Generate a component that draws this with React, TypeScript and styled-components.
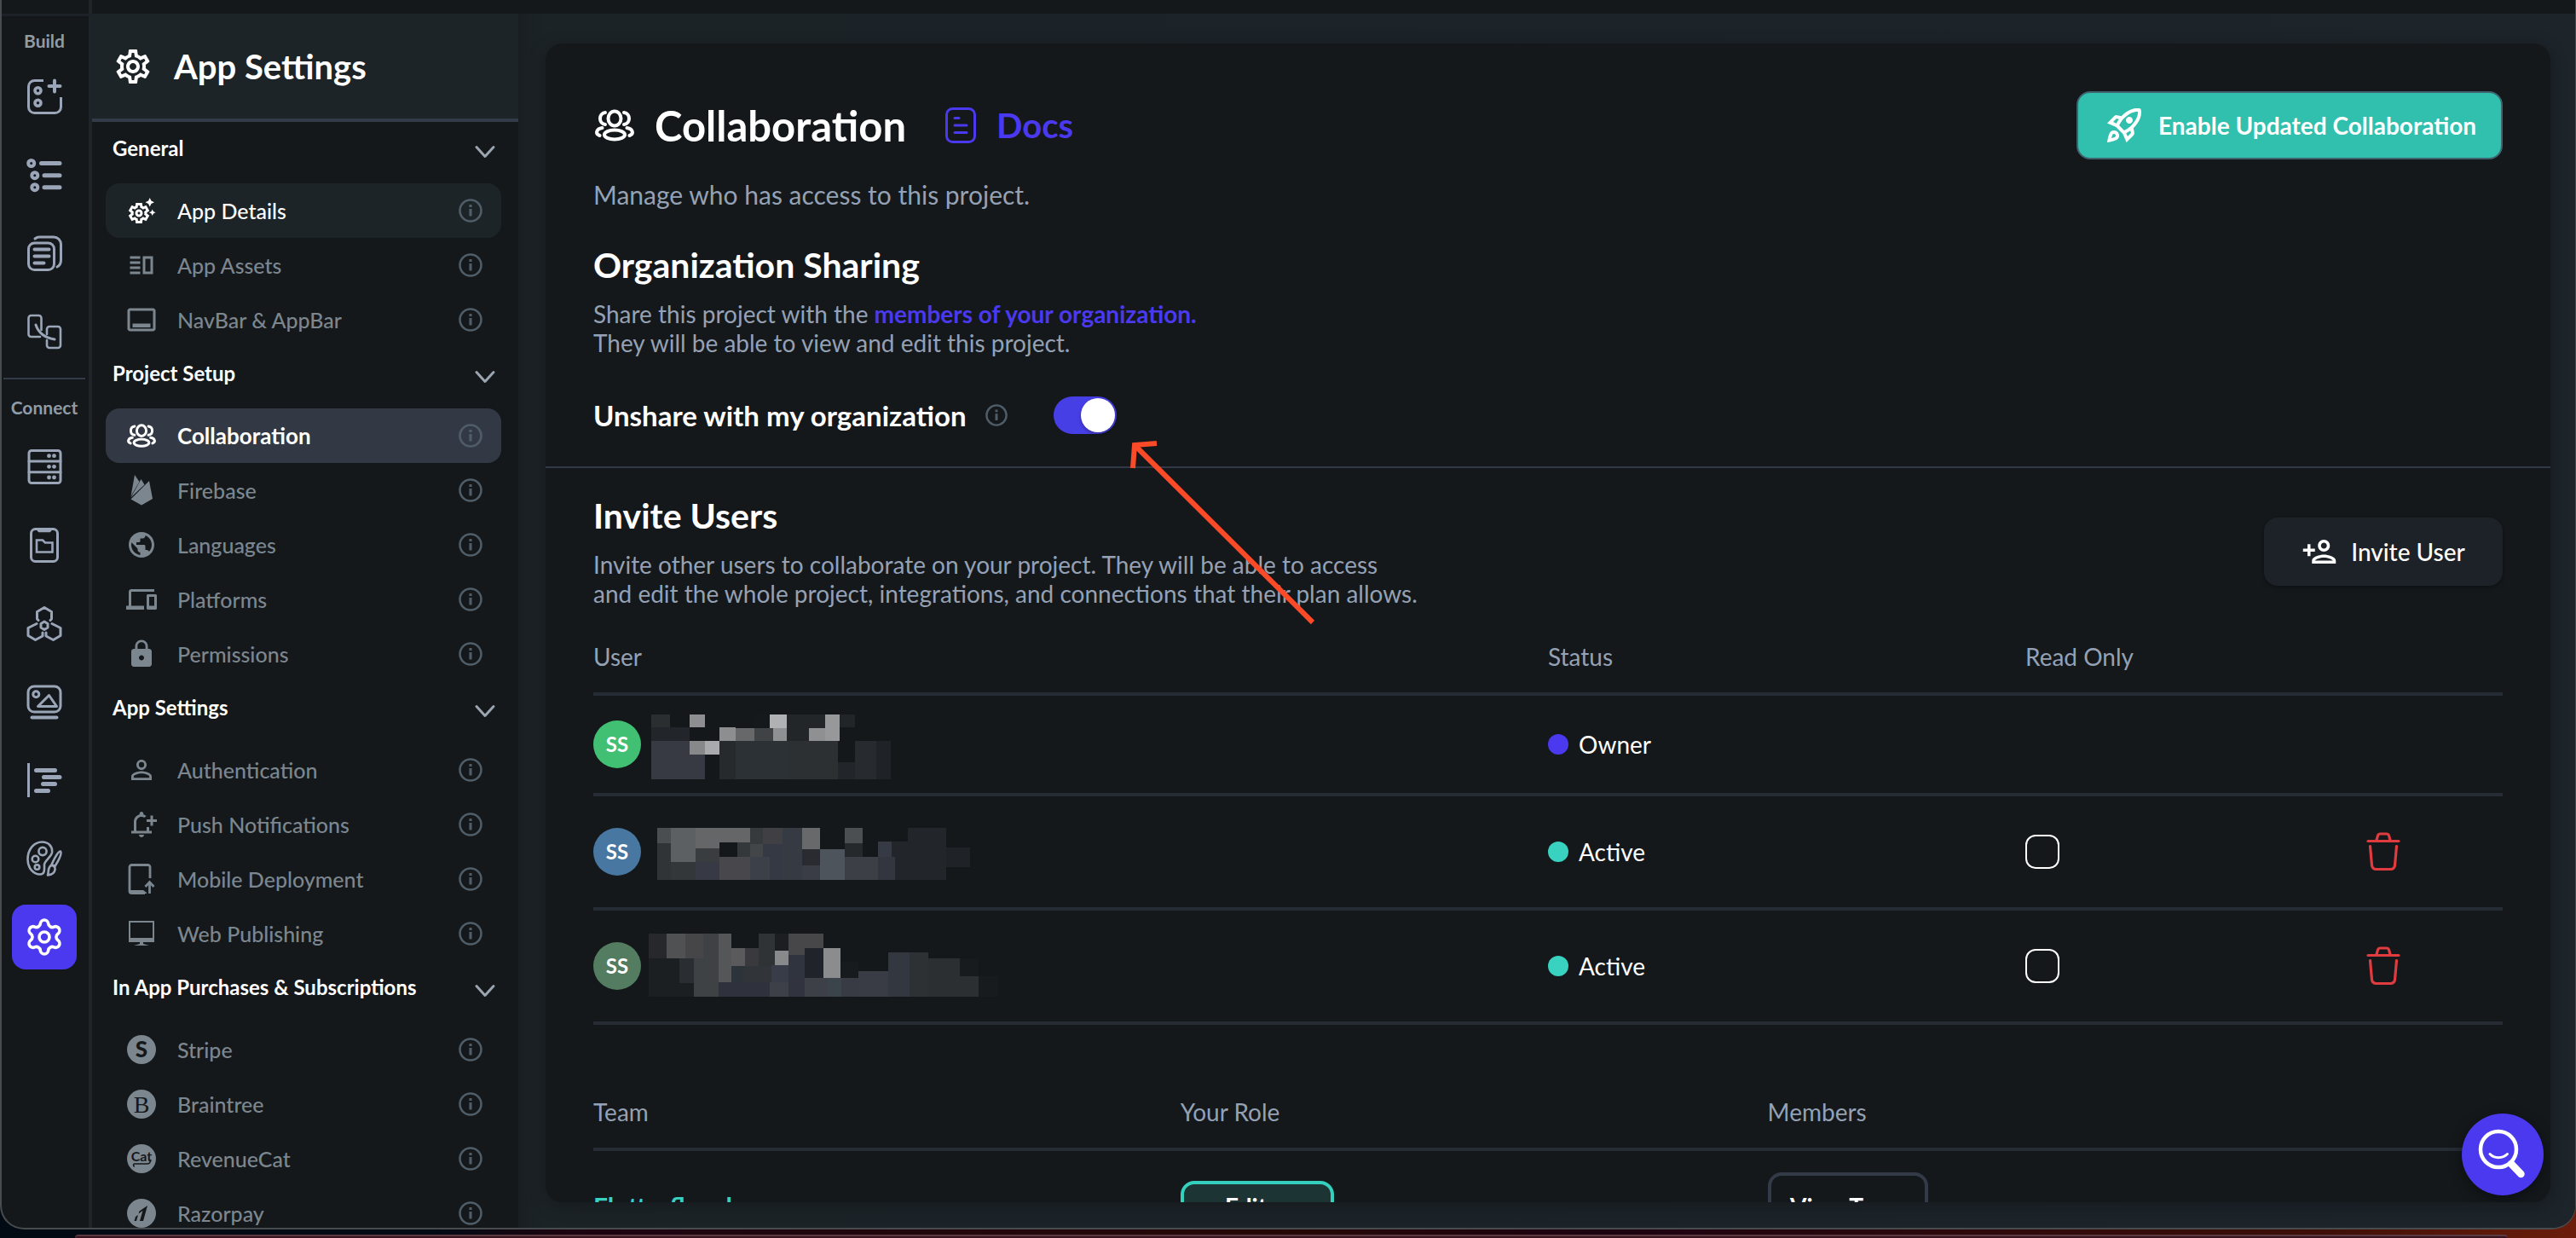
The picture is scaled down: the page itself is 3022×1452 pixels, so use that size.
import React, { useState } from "react";
import styled, { createGlobalStyle } from "styled-components";
import {
  MdOutlineSettings,
  MdOutlineSettingsSuggest,
  MdOutlineVerticalSplit,
  MdOutlineCallToAction,
  MdPublic,
  MdDevices,
  MdLock,
  MdPersonOutline,
  MdOutlineNotificationAdd,
  MdOutlineRocketLaunch,
  MdOutlinePersonAdd,
} from "react-icons/md";
import { Settings } from "lucide-react";

const color = {
  surface: "#14181b",
  raised: "#1d2428",
  line: "#323b47",
  tableLine: "#252c33",
  text: "#ffffff",
  body: "#95a1b4",
  muted: "#7c868f",
  hint: "#4f5d68",
  primary: "#4b39ef",
  teal: "#39d2c0",
  red: "#e03c40",
};

const GlobalStyle = createGlobalStyle`
  *, *::before, *::after { box-sizing: border-box; }
  body { margin: 0; background: #020b14; }
  body, button, input, table {
    font-family: Lato, "Open Sans", sans-serif;
    color: ${color.text};
  }
  button { border: 0; padding: 0; background: none; cursor: pointer; text-align: left; }
  h1, h2, p, ul { margin: 0; padding: 0; }
  ul { list-style: none; }
  a { text-decoration: none; }
  svg { display: block; flex: none; }
`;

const Desktop = styled.div`
  height: 100vh;
  overflow: hidden;
  display: flex;
  flex-direction: column;
  gap: 6px;
  background: linear-gradient(90deg, #020b14 0 17%, #1c0410 22%, #260806 50%, #1c0210 62%, #3d0f07 90%, #6b1d0a);
`;

const AppWindow = styled.div`
  flex: 1;
  min-height: 0;
  display: flex;
  flex-direction: column;
  overflow: hidden;
  background: ${color.surface};
  border: 2px solid #484c4e;
  border-top: 0;
  border-right-width: 1px;
  border-radius: 0 0 28px 28px;
`;

const BehindWindow = styled.div`
  height: 4px;
  margin: 0 80px 0 88px;
  border-top: 2px solid #5a3a40;
  border-radius: 20px 20px 0 0;
  background: #3a1420;
`;

const TopBar = styled.div`
  flex: none;
  height: 16px;
  width: 106px;
  border-right: 4px solid #1e2429;
`;

const Body = styled.div`
  flex: 1;
  min-height: 0;
  display: flex;
`;

const Rail = styled.nav`
  flex: none;
  width: 106px;
  padding-right: 2px;
  border-top: 3px solid #1d2229;
  border-right: 4px solid #1e2429;
  display: flex;
  flex-direction: column;
  align-items: center;
`;

const RailLabel = styled.div<{ $tall?: boolean }>`
  flex: none;
  height: ${(p) => (p.$tall ? 64 : 56)}px;
  display: flex;
  align-items: center;
  font-size: 21px;
  font-weight: 700;
  color: #8f9ba7;
`;

const RailGroup = styled.div`
  flex: none;
  display: flex;
  flex-direction: column;
  gap: 16px;
`;

const RailButton = styled.button<{ $active?: boolean }>`
  width: 76px;
  height: 76px;
  display: flex;
  align-items: center;
  justify-content: center;
  border-radius: 16px;
  color: ${(p) => (p.$active ? "#fff" : "#9aa5b8")};
  background: ${(p) => (p.$active ? color.primary : "transparent")};
`;

const RailDivider = styled.div`
  flex: none;
  align-self: stretch;
  height: 2px;
  margin: 16px 2px 0;
  background: ${color.line};
`;

const Panel = styled.aside`
  flex: none;
  width: 500px;
  overflow: hidden;
  display: flex;
  flex-direction: column;
`;

const PanelHeader = styled.header`
  flex: none;
  display: flex;
  align-items: center;
  gap: 24px;
  height: 127px;
  padding: 0 24px;
  background: ${color.raised};
  border-bottom: 4px solid ${color.line};
`;

const PanelTitle = styled.h2`
  font-size: 40px;
  line-height: 48px;
  font-weight: 700;
`;

const SectionToggle = styled.button`
  flex: none;
  width: 100%;
  height: 72px;
  padding: 0 26px 12px 24px;
  display: flex;
  align-items: center;
  justify-content: space-between;
  font-size: 24px;
  font-weight: 700;
`;

const MenuItem = styled.li<{ $tone?: "raised" | "active" }>`
  display: flex;
  align-items: center;
  height: 64px;
  margin: 0 20px 0 16px;
  padding: 0 22px 0 24px;
  border-radius: 16px;
  color: ${(p) => (p.$tone ? "#fff" : color.muted)};
  background: ${(p) => (p.$tone === "active" ? "#323945" : p.$tone === "raised" ? color.raised : "transparent")};
`;

const MenuLink = styled.a<{ $bold?: boolean }>`
  flex: 1;
  display: flex;
  align-items: center;
  gap: 24px;
  font-size: ${(p) => (p.$bold ? 26 : 25)}px;
  line-height: 32px;
  font-weight: ${(p) => (p.$bold ? 700 : 500)};
  color: inherit;
`;

const IconSlot = styled.span`
  width: 36px;
  display: flex;
  align-items: center;
  justify-content: center;
`;

const InfoButton = styled.button`
  color: ${color.hint};
`;

const Main = styled.main`
  flex: 1;
  min-width: 0;
  padding: 35px 29px 30px 32px;
  background: linear-gradient(90deg, #191e21, #1c2327 32px, #1d242a);
`;

const Card = styled.div`
  position: relative;
  height: 100%;
  overflow: hidden;
  border-radius: 20px;
  background: ${color.surface};
  box-shadow: 0 4px 20px rgba(0, 0, 0, 0.3);
`;

const Sharing = styled.section`
  padding: 56px 56px 38px;
  border-bottom: 2px solid #323845;
`;

const SplitRow = styled.div`
  display: flex;
  align-items: center;
  justify-content: space-between;
`;

const TitleGroup = styled.div`
  display: flex;
  align-items: center;
  gap: 24px;
  padding-left: 2px;
`;

const Title = styled.h1`
  font-size: 49px;
  line-height: 58px;
  font-weight: 700;
`;

const DocsLink = styled.a`
  display: flex;
  align-items: center;
  gap: 24px;
  margin-left: 22px;
  font-size: 40px;
  line-height: 48px;
  font-weight: 700;
  color: ${color.primary};
`;

const EnableButton = styled.button`
  min-width: 500px;
  height: 80px;
  display: flex;
  align-items: center;
  gap: 16px;
  padding: 0 24px 0 30px;
  border: 2px solid #3f6470;
  border-radius: 16px;
  background: #31bfae;
  font-size: 28px;
  font-weight: 700;
`;

const Text = styled.p<{ $gap?: number; $lead?: boolean }>`
  margin-top: ${(p) => p.$gap ?? 16}px;
  font-size: ${(p) => (p.$lead ? 30 : 28)}px;
  line-height: 34px;
  color: ${color.body};
`;

const MembersLink = styled.a`
  font-weight: 700;
  color: ${color.primary};
`;

const SectionTitle = styled.h2<{ $gap?: number }>`
  margin-top: ${(p) => p.$gap ?? 0}px;
  font-size: 41px;
  line-height: 48px;
  font-weight: 700;
`;

const SwitchRow = styled.div`
  display: flex;
  align-items: center;
  height: 44px;
  margin-top: 46px;
`;

const SwitchLabel = styled.label`
  margin-right: 22px;
  font-size: 33px;
  line-height: 40px;
  font-weight: 700;
`;

const Switch = styled.input`
  appearance: none;
  width: 74px;
  height: 44px;
  margin: 0 0 0 54px;
  padding: 2px;
  border-radius: 22px;
  background: #473fe6;
  display: flex;
  justify-content: flex-start;
  cursor: pointer;
  &::before {
    content: "";
    width: 40px;
    height: 40px;
    border-radius: 50%;
    background: #fff;
    box-shadow: 0 2px 4px rgba(0, 0, 0, 0.3);
  }
  &:checked { justify-content: flex-end; }
`;

const Invite = styled.section`
  padding: 32px 56px 0;
`;

const InviteButton = styled.button`
  height: 80px;
  width: 280px;
  display: flex;
  align-items: center;
  justify-content: center;
  gap: 16px;
  border-radius: 16px;
  background: #1d2229;
  box-shadow: 0 2px 4px rgba(0, 0, 0, 0.3);
  font-size: 28px;
  font-weight: 500;
`;

const Table = styled.table`
  width: 100%;
  table-layout: fixed;
  border-collapse: separate;
  border-spacing: 0;
  font-size: 28px;
  line-height: 34px;
`;

const Col = styled.col<{ $share: string }>`
  width: ${(p) => p.$share};
`;

const HeadCell = styled.th<{ $top: number }>`
  padding: ${(p) => p.$top}px 0 25px;
  border-bottom: 4px solid ${color.tableLine};
  text-align: left;
  font-weight: 400;
  color: ${color.body};
`;

const Cell = styled.td<{ $height?: number }>`
  height: ${(p) => (p.$height ?? 130) + 4}px;
  padding: 0;
  border-bottom: 4px solid ${color.tableLine};
  vertical-align: middle;
`;

const Person = styled.div`
  display: flex;
  align-items: center;
  gap: 8px;
`;

const Avatar = styled.span<{ $bg: string }>`
  width: 56px;
  height: 56px;
  border-radius: 50%;
  display: flex;
  align-items: center;
  justify-content: center;
  font-size: 24px;
  font-weight: 700;
  background: ${(p) => p.$bg};
`;

const Status = styled.div<{ $dot: string }>`
  display: flex;
  align-items: center;
  gap: 12px;
  &::before {
    content: "";
    width: 24px;
    height: 24px;
    border-radius: 50%;
    background: ${(p) => p.$dot};
  }
`;

const Check = styled.input`
  appearance: none;
  display: block;
  width: 40px;
  height: 40px;
  margin: 0;
  border: 2px solid #fff;
  border-radius: 12px;
  &:checked { background: ${color.primary}; }
`;

const TrashButton = styled.button`
  display: block;
  margin: 0 auto;
  color: ${color.red};
`;

const TeamLink = styled.a`
  font-size: 30px;
  font-weight: 700;
  color: ${color.teal};
`;

const RoleBadge = styled.span`
  display: flex;
  align-items: center;
  justify-content: center;
  width: 180px;
  height: 60px;
  border: 4px solid #35cfbd;
  border-radius: 16px;
  background: #1c3433;
  font-weight: 700;
`;

const ViewTeamButton = styled.button`
  display: block;
  width: 188px;
  height: 80px;
  border: 4px solid ${color.line};
  border-radius: 16px;
  font-size: 28px;
  font-weight: 700;
  text-align: center;
`;

const ArrowMark = styled.svg`
  position: absolute;
  left: 680px;
  top: 460px;
  pointer-events: none;
`;

const SearchFab = styled.button`
  position: absolute;
  right: 8px;
  bottom: 8px;
  width: 96px;
  height: 96px;
  border-radius: 50%;
  background: ${color.primary};
  box-shadow: 0 4px 16px rgba(0, 0, 0, 0.4);
`;

/* ---------- icons ---------- */

const RailSvg = ({ children, w = 3 }: { children: React.ReactNode; w?: number }) => (
  <svg width="42" height="42" viewBox="0 0 42 42" fill="none" stroke="currentColor" strokeWidth={w} strokeLinecap="round" strokeLinejoin="round" aria-hidden="true">
    {children}
  </svg>
);

const WidgetsIcon = () => (
  <RailSvg w={3}>
    <path d="M20 2.5H9.500a7 7 0 0 0-7 7v24a7 7 0 0 0 7 7h24a7 7 0 0 0 7-7V22" strokeLinecap="butt" />
    <circle cx="13.500" cy="14.300" r="3.500" strokeWidth="3.600" />
    <circle cx="13.500" cy="28.700" r="3.500" strokeWidth="3.600" />
    <path d="M33 2.500v13M26.500 9h13" strokeWidth="4" />
  </RailSvg>
);
const TreeIcon = () => (
  <RailSvg w={4}>
    <circle cx="5.700" cy="7.500" r="3.500" />
    <circle cx="9.800" cy="21.700" r="3.500" />
    <circle cx="9.800" cy="35.700" r="3.500" />
    <path d="M17.500 7.500H39M21 21.700h18M21 35.700h18" strokeWidth="5" />
  </RailSvg>
);
const PagesIcon = () => (
  <RailSvg>
    <rect x="2.500" y="9" width="30" height="31.500" rx="7" />
    <path d="M10 4c1.500-1.300 3-2 5-2h17a8.500 8.500 0 0 1 8.500 8.500V29c0 4-1.500 6.500-4.500 8" />
    <path d="M9.500 16.500h17M9.500 24.500h17M9.500 32.500h11" strokeWidth="4" />
  </RailSvg>
);
const FlowIcon = () => (
  <RailSvg w={2.6}>
    <path d="M17.500 19V5a3 3 0 0 0-3-3h-9a3 3 0 0 0-3 3v19a3 3 0 0 0 3 3H16" />
    <path d="M24 24v-6a3 3 0 0 1 3-3h10a3 3 0 0 1 3 3v19a3 3 0 0 1-3 3H27a3 3 0 0 1-3-3v-6" />
    <path d="M11 13c3 9 9 15 22 17" strokeWidth="3" />
  </RailSvg>
);
const DatabaseIcon = () => (
  <RailSvg>
    <rect x="3" y="2.500" width="37" height="38" rx="3" />
    <path d="M3 15h37M3 27.700h37" />
    {[8.700, 21.300, 34].map((y) => (
      <g key={y} fill="currentColor" stroke="none">
        <circle cx="26.500" cy={y} r="2.400" />
        <circle cx="32.500" cy={y} r="2.400" />
      </g>
    ))}
  </RailSvg>
);
const ApiFolderIcon = () => (
  <RailSvg>
    <rect x="5.500" y="2.500" width="31" height="38" rx="5" />
    <path d="M12.500 3h17l-2 2.500h-13z" fill="currentColor" strokeWidth="1.500" />
    <path d="M12 15.500h7l3 3h8.500v11H12z" strokeWidth="2.600" strokeLinejoin="miter" />
  </RailSvg>
);
const HexIcon = () => (
  <RailSvg>
    <path d="M14 17.500l-1.500-1.500V7.500l8.500-5 8.500 5V16L28 17.500" />
    <path d="M12 21.500L2 26.500v9l8.500 5 8.500-4.500V32" />
    <path d="M30 21.500l10 5v9l-8.500 5L23 36v-4" />
    <path d="M21 19l4 2.500v4.500l-4 2.500-4-2.500v-4.500z" />
  </RailSvg>
);
const MediaIcon = () => (
  <RailSvg>
    <rect x="2" y="3" width="38" height="30" rx="7" />
    <circle cx="11.300" cy="12.300" r="3.500" />
    <path d="M26.500 13.500L13.500 26.500h22z" />
    <path d="M6.500 39.500h29" strokeWidth="4" />
  </RailSvg>
);
const TimelineIcon = () => (
  <RailSvg w={5}>
    <path d="M2.500 1v40" strokeWidth="3" strokeLinecap="butt" />
    <path d="M11.500 9.500h22M20.500 17.500H39M19.500 25.500h14M11.500 33.500h14" />
  </RailSvg>
);
const ThemeIcon = () => (
  <RailSvg w={2.6}>
    <path d="M21 28c0-4 8-9 9-14C31 6 25 1.500 18.500 1.500 8 1.500 1.500 11 1.500 22S9 39.500 16 39.500c6 0 5-6 5-11.500z" />
    <circle cx="19" cy="12.500" r="4.600" />
    <circle cx="10.500" cy="21.500" r="3.800" />
    <circle cx="12.500" cy="31" r="2.800" />
    <path d="M40 12.500c1.500 2-.5 8-6.500 17.500l-4-2C34 18 38 12 40 12.500z" />
    <path d="M29 29c3 0 5 2 4.500 5-.5 3.500-4 6-8.500 6.500 1.500-4-.5-9 4-11.500z" />
  </RailSvg>
);

const InfoIcon = ({ size = 28 }: { size?: number }) => (
  <svg width={size} height={size} viewBox="0 0 28 28" fill="none" stroke="currentColor" strokeWidth="2.600" aria-hidden="true">
    <circle cx="14" cy="14" r="12.500" />
    <path d="M14 12v8.500" strokeWidth="3.200" />
    <path d="M14 7v3" strokeWidth="3.200" />
  </svg>
);
const Chevron = () => (
  <svg width="26" height="26" viewBox="0 0 26 26" fill="none" stroke="#9aa5b0" strokeWidth="3" strokeLinecap="round" strokeLinejoin="round" aria-hidden="true">
    <path d="M3 12.500l10 11 10-11" />
  </svg>
);
const GroupIcon = ({ width }: { width: number }) => (
  <svg width={width} height={(width * 38) / 46} viewBox="0 0 46 38" fill="none" stroke="currentColor" strokeWidth="4" strokeLinecap="round" aria-hidden="true">
    <ellipse cx="23" cy="11" rx="7.500" ry="8.500" />
    <ellipse cx="23" cy="30" rx="12" ry="5.500" />
    <path d="M12 4c-8 1-8 13 0 14M34 4c8 1 8 13 0 14" />
    <path d="M8.500 22c-7 1-8.500 7-3 9M37.500 22c7 1 8.500 7 3 9" />
  </svg>
);
const FirebaseIcon = () => (
  <svg width="26" height="36" viewBox="0 0 26 36" fill="currentColor" aria-hidden="true">
    <path d="M.5 25L5 0l5.500 8z" />
    <path d="M.5 26.500L12.500 5l4 6.500z" />
    <path d="M.5 28.500L22 7l4 21-13 7.500z" />
  </svg>
);
const MobileDeployIcon = () => (
  <svg width="32" height="36" viewBox="0 0 32 36" fill="none" stroke="currentColor" strokeWidth="2.800" aria-hidden="true">
    <path d="M26 17V4a2.500 2.500 0 0 0-2.500-2.500h-19A2.500 2.500 0 0 0 2 4v28a2.500 2.500 0 0 0 2.500 2.500H20" />
    <path d="M2 31.500h16l4 3H4z" fill="currentColor" strokeWidth="1" />
    <path d="M25.500 35V23M20.500 27l5-5.500 5 5.500" />
  </svg>
);
const MonitorIcon = () => (
  <svg width="32" height="30" viewBox="0 0 32 30" fill="currentColor" aria-hidden="true">
    <path d="M1 0h30v25H1zM3 2v18h26V2z" fillRule="evenodd" />
    <path d="M14 25h4v2l7 2H7l7-2z" />
  </svg>
);
const LetterCoin = ({ letter, size = 28, family = "Lato", weight = 700 }: { letter: string; size?: number; family?: string; weight?: number }) => (
  <svg width="34" height="34" viewBox="0 0 34 34" aria-hidden="true">
    <circle cx="17" cy="17" r="17" fill="currentColor" />
    <text x="17" y={17 + size * 0.36} textAnchor="middle" fontFamily={family} fontWeight={weight} fontSize={size} fill={color.surface}>
      {letter}
    </text>
  </svg>
);
const RevenueCatIcon = () => (
  <svg width="34" height="34" viewBox="0 0 34 34" aria-hidden="true">
    <circle cx="17" cy="17" r="17" fill="currentColor" />
    <text x="17" y="20" textAnchor="middle" fontFamily="Lato" fontWeight="700" fontSize="16" fill={color.surface}>Cat</text>
    <path d="M27 18c1 4-1 5-4 5H9c-2 0-2 3 0 3" fill="none" stroke={color.surface} strokeWidth="1.500" />
  </svg>
);
const RazorpayIcon = () => (
  <svg width="34" height="34" viewBox="0 0 34 34" aria-hidden="true">
    <circle cx="17" cy="17" r="17" fill="currentColor" />
    <path d="M24 8l-5 18h-4l3.500-12-5 3.500 1-3zM13 19l-2 7H8.500l1.500-5z" fill={color.surface} />
  </svg>
);
const DocsIcon = () => (
  <svg width="36" height="42" viewBox="0 0 36 42" fill="none" stroke="currentColor" strokeWidth="3" strokeLinecap="round" aria-hidden="true">
    <rect x="1.500" y="1.500" width="33" height="39" rx="7" />
    <path d="M11 12.500h5M11 21h14M11 29.500h14" />
  </svg>
);
const TrashIcon = () => (
  <svg width="40" height="46" viewBox="0 0 40 46" fill="none" stroke="currentColor" strokeWidth="3.200" strokeLinecap="round" strokeLinejoin="round" aria-hidden="true">
    <path d="M2 10.500h36M12 9.500l1.500-5.500a3 3 0 0 1 3-2h7a3 3 0 0 1 3 2L28 9.500" />
    <path d="M4.500 16.500L6.500 39a5 5 0 0 0 5 4.500h17a5 5 0 0 0 5-4.500l2-22.500" />
  </svg>
);
const SmileSearchIcon = () => (
  <svg width="96" height="96" viewBox="0 0 96 96" fill="none" stroke="#fff" strokeLinecap="round" aria-hidden="true">
    <circle cx="43" cy="42" r="21" strokeWidth="4.500" />
    <path d="M33 47.500c5 5.500 15 5.500 20.500 0" strokeWidth="3" />
    <path d="M58 59l11.500 12" strokeWidth="8.500" />
  </svg>
);

/* ---------- pixelated names ---------- */

type Block = [number, number, number, number, string];

const mosaics: Record<string, { top: number; blocks: Block[] }> = {
  owner: {
    top: 643,
    blocks: [
      [194, 660, 35, 36, "#2b2e30"], [265, 660, 28, 36, "#8e8e90"], [384, 660, 28, 36, "#16191c"], [412, 660, 32, 38, "#b0b1b3"],
      [444, 660, 70, 74, "#232628"], [514, 660, 27, 74, "#97989a"], [541, 660, 28, 36, "#222528"], [194, 696, 71, 38, "#222529"],
      [320, 696, 30, 38, "#8d8e90"], [350, 698, 34, 36, "#67686a"], [384, 698, 35, 36, "#3f4345"], [419, 698, 25, 36, "#8f9092"],
      [485, 698, 29, 36, "#8f9092"], [194, 734, 99, 107, "#373a43"], [265, 734, 28, 38, "#87888a"], [293, 734, 27, 38, "#a9aaac"],
      [320, 734, 30, 107, "#262a2d"], [350, 734, 94, 107, "#2c3136"], [444, 734, 94, 107, "#2c3033"], [538, 794, 31, 47, "#222529"],
      [569, 734, 39, 107, "#272a2e"], [608, 734, 27, 107, "#1f2227"],
    ],
  },
  second: {
    top: 942,
    blocks: [
      [205, 976, 25, 43, "#4b4e50"], [230, 976, 46, 95, "#5d6062"], [276, 976, 100, 41, "#656668"], [276, 1017, 44, 16, "#656668"],
      [376, 976, 24, 45, "#363a3d"], [400, 976, 36, 45, "#403f43"], [436, 976, 36, 145, "#363a43"], [472, 976, 33, 60, "#67696a"],
      [550, 976, 33, 43, "#4c4f51"], [205, 1019, 25, 102, "#303437"], [230, 1071, 46, 50, "#333739"], [276, 1033, 44, 38, "#3a3d40"],
      [276, 1071, 44, 50, "#373a44"], [320, 1057, 56, 64, "#48474b"], [353, 1017, 23, 40, "#34383a"], [376, 1021, 24, 36, "#434648"],
      [400, 1021, 36, 100, "#353943"], [376, 1057, 36, 64, "#3c4048"], [472, 1036, 33, 43, "#2a2b30"], [472, 1079, 33, 42, "#3a3d46"],
      [505, 1036, 45, 85, "#4d545b"], [550, 1019, 33, 38, "#26292c"], [550, 1057, 62, 64, "#3c4046"], [612, 1014, 25, 43, "#363a44"],
      [612, 1057, 31, 64, "#33363f"], [637, 1014, 29, 43, "#22252a"], [643, 1057, 23, 64, "#22252a"], [666, 976, 71, 145, "#22252a"],
      [737, 1031, 44, 55, "#1f2227"],
    ],
  },
  third: {
    top: 1261,
    blocks: [
      [190, 1271, 33, 69, "#26282b"], [223, 1271, 34, 69, "#505153"], [257, 1271, 33, 69, "#464648"], [290, 1271, 28, 176, "#3f4245"],
      [318, 1271, 24, 135, "#545658"], [342, 1311, 25, 50, "#5a5a5c"], [367, 1311, 25, 50, "#3a393d"], [392, 1271, 30, 90, "#2f3336"],
      [422, 1271, 25, 48, "#1c1f22"], [447, 1271, 64, 40, "#474749"], [447, 1311, 30, 19, "#474749"], [422, 1319, 25, 40, "#88898b"],
      [477, 1311, 34, 84, "#20232a"], [511, 1311, 32, 84, "#8b8c8e"], [190, 1340, 56, 107, "#1c1f22"], [246, 1340, 27, 69, "#2a2d31"],
      [246, 1409, 27, 38, "#1c1f22"], [273, 1340, 17, 107, "#3f4245"], [342, 1361, 25, 45, "#2c343a"], [367, 1361, 48, 45, "#31353a"],
      [415, 1359, 32, 47, "#383c48"], [447, 1330, 30, 65, "#30343f"], [318, 1406, 94, 41, "#2f323d"], [412, 1406, 35, 41, "#3e4048"],
      [447, 1395, 30, 52, "#31343f"], [477, 1395, 41, 52, "#3d4047"], [518, 1395, 26, 52, "#3b444b"], [543, 1350, 32, 45, "#181b1e"],
      [544, 1395, 31, 52, "#383b43"], [575, 1376, 55, 71, "#3a3c45"], [630, 1323, 40, 124, "#33373f"], [670, 1323, 34, 124, "#2e3134"],
      [704, 1340, 58, 107, "#2b2f31"], [762, 1340, 35, 50, "#181b1e"], [762, 1390, 35, 57, "#2b2f31"], [797, 1390, 36, 57, "#181b1e"],
    ],
  },
};

const Mosaic = ({ name }: { name: string }) => (
  <svg width="421" height="84" viewBox={`188 ${mosaics[name].top} 660 200`} preserveAspectRatio="none" shapeRendering="crispEdges" role="img" aria-label="Hidden user">
    {mosaics[name].blocks.map(([x, y, w, h, fill], i) => (
      <rect key={i} x={x} y={y} width={w} height={h} fill={fill} />
    ))}
  </svg>
);

/* ---------- data ---------- */

const buildTools = [
  { label: "Widget palette", icon: <WidgetsIcon /> },
  { label: "Widget tree", icon: <TreeIcon /> },
  { label: "Page selector", icon: <PagesIcon /> },
  { label: "Storyboard", icon: <FlowIcon /> },
];
const connectTools = [
  { label: "Firestore", icon: <DatabaseIcon /> },
  { label: "App state", icon: <ApiFolderIcon /> },
  { label: "API calls", icon: <HexIcon /> },
  { label: "Media assets", icon: <MediaIcon /> },
  { label: "Custom functions", icon: <TimelineIcon /> },
  { label: "Theme settings", icon: <ThemeIcon /> },
  { label: "Settings", icon: <Settings size={48} strokeWidth={1.8} />, active: true },
];

type Item = { label: string; icon: React.ReactNode; tone?: "raised" | "active" };
const menu: { title: string; items: Item[] }[] = [
  {
    title: "General",
    items: [
      { label: "App Details", icon: <MdOutlineSettingsSuggest size={36} />, tone: "raised" },
      { label: "App Assets", icon: <MdOutlineVerticalSplit size={36} /> },
      { label: "NavBar & AppBar", icon: <MdOutlineCallToAction size={36} /> },
    ],
  },
  {
    title: "Project Setup",
    items: [
      { label: "Collaboration", icon: <GroupIcon width={34} />, tone: "active" },
      { label: "Firebase", icon: <FirebaseIcon /> },
      { label: "Languages", icon: <MdPublic size={36} /> },
      { label: "Platforms", icon: <MdDevices size={36} /> },
      { label: "Permissions", icon: <MdLock size={36} /> },
    ],
  },
  {
    title: "App Settings",
    items: [
      { label: "Authentication", icon: <MdPersonOutline size={36} /> },
      { label: "Push Notifications", icon: <MdOutlineNotificationAdd size={36} /> },
      { label: "Mobile Deployment", icon: <MobileDeployIcon /> },
      { label: "Web Publishing", icon: <MonitorIcon /> },
    ],
  },
  {
    title: "In App Purchases & Subscriptions",
    items: [
      { label: "Stripe", icon: <LetterCoin letter="S" weight={900} size={26} /> },
      { label: "Braintree", icon: <LetterCoin letter="B" size={28} weight={400} family="Liberation Serif" /> },
      { label: "RevenueCat", icon: <RevenueCatIcon /> },
      { label: "Razorpay", icon: <RazorpayIcon /> },
    ],
  },
];

const users = [
  { name: "owner", avatar: "#41bf73", status: "Owner", dot: color.primary, height: 114, editable: false },
  { name: "second", avatar: "#4877a1", status: "Active", dot: "#39d2c0", height: 130, editable: true },
  { name: "third", avatar: "#537c60", status: "Active", dot: "#39d2c0", height: 130, editable: true },
];

export default function App() {
  const [shared, setShared] = useState(true);
  return (
    <>
      <GlobalStyle />
      <Desktop>
        <AppWindow>
          <TopBar />
          <Body>
            <Rail aria-label="Tools">
              <RailLabel>Build</RailLabel>
              <RailGroup>
                {buildTools.map((t) => (
                  <RailButton key={t.label} aria-label={t.label}>{t.icon}</RailButton>
                ))}
              </RailGroup>
              <RailDivider />
              <RailLabel $tall>Connect</RailLabel>
              <RailGroup>
                {connectTools.map((t) => (
                  <RailButton key={t.label} aria-label={t.label} $active={t.active}>{t.icon}</RailButton>
                ))}
              </RailGroup>
            </Rail>

            <Panel>
              <PanelHeader>
                <MdOutlineSettings size={48} />
                <PanelTitle>App Settings</PanelTitle>
              </PanelHeader>
              {menu.map((section) => (
                <React.Fragment key={section.title}>
                  <SectionToggle aria-expanded="true">
                    {section.title}
                    <Chevron />
                  </SectionToggle>
                  <ul>
                    {section.items.map((item) => (
                      <MenuItem key={item.label} $tone={item.tone}>
                        <MenuLink href="#" $bold={item.tone === "active"}>
                          <IconSlot>{item.icon}</IconSlot>
                          {item.label}
                        </MenuLink>
                        <InfoButton aria-label={`About ${item.label}`}>
                          <InfoIcon />
                        </InfoButton>
                      </MenuItem>
                    ))}
                  </ul>
                </React.Fragment>
              ))}
            </Panel>

            <Main>
              <Card>
                <Sharing>
                  <SplitRow>
                    <TitleGroup>
                      <GroupIcon width={46} />
                      <Title>Collaboration</Title>
                      <DocsLink href="#">
                        <DocsIcon />
                        Docs
                      </DocsLink>
                    </TitleGroup>
                    <EnableButton>
                      <MdOutlineRocketLaunch size={48} />
                      Enable Updated Collaboration
                    </EnableButton>
                  </SplitRow>
                  <Text $gap={24} $lead>Manage who has access to this project.</Text>
                  <SectionTitle $gap={42}>Organization Sharing</SectionTitle>
                  <Text>
                    Share this project with the <MembersLink href="#">members of your organization.</MembersLink>
                    <br />
                    They will be able to view and edit this project.
                  </Text>
                  <SwitchRow>
                    <SwitchLabel htmlFor="share">Unshare with my organization</SwitchLabel>
                    <InfoButton aria-label="About sharing">
                      <InfoIcon size={26} />
                    </InfoButton>
                    <Switch id="share" type="checkbox" role="switch" checked={shared} onChange={() => setShared(!shared)} />
                  </SwitchRow>
                </Sharing>

                <Invite>
                  <SplitRow>
                    <div>
                      <SectionTitle>Invite Users</SectionTitle>
                      <Text>
                        Invite other users to collaborate on your project. They will be able to access
                        <br />
                        and edit the whole project, integrations, and connections that their plan allows.
                      </Text>
                    </div>
                    <InviteButton>
                      <MdOutlinePersonAdd size={42} />
                      Invite User
                    </InviteButton>
                  </SplitRow>

                  <Table>
                    <colgroup>
                      <Col $share="50%" />
                      <Col $share="25%" />
                      <Col $share="12.5%" />
                      <Col $share="12.5%" />
                    </colgroup>
                    <thead>
                      <tr>
                        <HeadCell $top={40}>User</HeadCell>
                        <HeadCell $top={40}>Status</HeadCell>
                        <HeadCell $top={40}>Read Only</HeadCell>
                        <HeadCell $top={40} />
                      </tr>
                    </thead>
                    <tbody>
                      {users.map((u) => (
                        <tr key={u.name}>
                          <Cell $height={u.height}>
                            <Person>
                              <Avatar $bg={u.avatar}>SS</Avatar>
                              <Mosaic name={u.name} />
                            </Person>
                          </Cell>
                          <Cell $height={u.height}>
                            <Status $dot={u.dot}>{u.status}</Status>
                          </Cell>
                          <Cell $height={u.height}>{u.editable && <Check type="checkbox" aria-label="Read only" />}</Cell>
                          <Cell $height={u.height}>
                            {u.editable && (
                              <TrashButton aria-label="Remove user">
                                <TrashIcon />
                              </TrashButton>
                            )}
                          </Cell>
                        </tr>
                      ))}
                    </tbody>
                  </Table>

                  <Table>
                    <colgroup>
                      <Col $share="30.75%" />
                      <Col $share="30.75%" />
                      <Col $share="38.5%" />
                    </colgroup>
                    <thead>
                      <tr>
                        <HeadCell $top={85}>Team</HeadCell>
                        <HeadCell $top={85}>Your Role</HeadCell>
                        <HeadCell $top={85}>Members</HeadCell>
                      </tr>
                    </thead>
                    <tbody>
                      <tr>
                        <Cell>
                          <TeamLink href="#">Flutterflow l</TeamLink>
                        </Cell>
                        <Cell>
                          <RoleBadge>Editor</RoleBadge>
                        </Cell>
                        <Cell>
                          <ViewTeamButton>View Team</ViewTeamButton>
                        </Cell>
                      </tr>
                    </tbody>
                  </Table>
                </Invite>

                <ArrowMark width="230" height="230" viewBox="0 0 230 230" fill="none" stroke="#fa4a28" strokeWidth="6" aria-hidden="true">
                  <path d="M220 219L12 12" />
                  <path d="M37 9L11 11L9 38" />
                </ArrowMark>
                <SearchFab aria-label="Search">
                  <SmileSearchIcon />
                </SearchFab>
              </Card>
            </Main>
          </Body>
        </AppWindow>
        <BehindWindow />
      </Desktop>
    </>
  );
}
